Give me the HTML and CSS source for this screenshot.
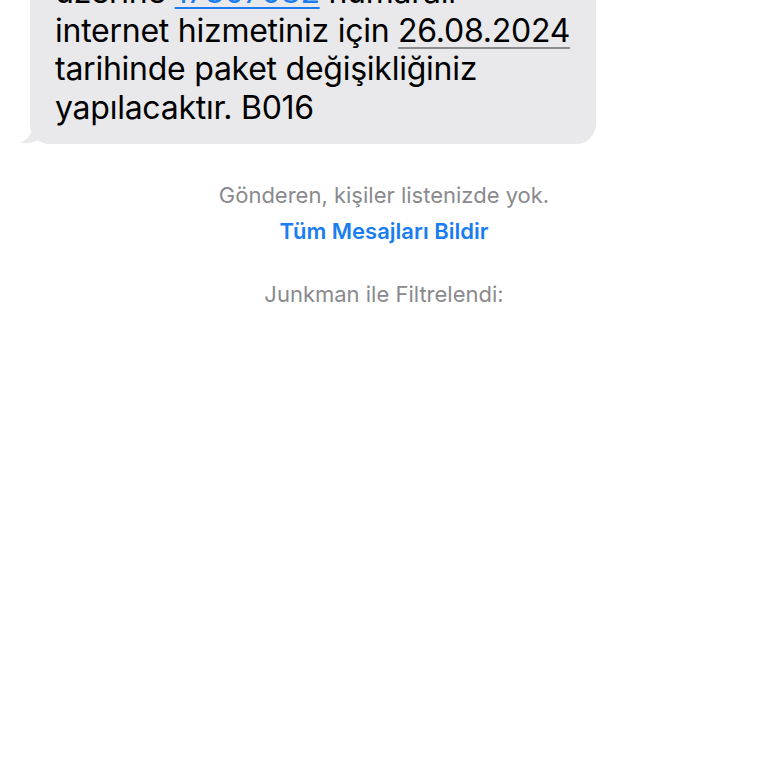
FILE: index.html
```html
<!DOCTYPE html>
<html lang="tr">
<head>
<meta charset="utf-8">
<title>Mesaj</title>
<link rel="stylesheet" href="styles.css">
</head>
<body>
<main class="thread">
  <div class="bubble">
    <svg class="tail" width="30" height="26" viewBox="0 0 30 26" aria-hidden="true">
      <path d="M14 0 C14 10 10 19 0 25 C8 26 16 24 22 19 L30 26 L30 0 Z" fill="#e9e9eb"/>
    </svg>
    <p class="msg">üzerine <span class="link">17307082</span> numaralı internet hizmetiniz için <span class="date">26.08.2024</span> tarihinde paket değişikliğiniz yapılacaktır. B016</p>
  </div>
  <p class="note">Gönderen, kişiler listenizde yok.</p>
  <p class="report">Tüm Mesajları Bildir</p>
  <p class="note filter">Junkman ile Filtrelendi:</p>
</main>
</body>
</html>
```
FILE: styles.css
```css
html, body {
  margin: 0;
  padding: 0;
  background: #ffffff;
}
body {
  font-family: Inter, "Noto Sans", "Liberation Sans", sans-serif;
  width: 768px;
  height: 768px;
  overflow: hidden;
}
.thread {
  display: flex;
  flex-direction: column;
  align-items: center;
}
.bubble {
  position: relative;
  align-self: flex-start;
  margin: -37px 0 0 30px;
  width: 566px;
  box-sizing: border-box;
  padding: 10px 20px 17px 25px;
  background: #e9e9eb;
  border-radius: 20px;
}
.tail {
  position: absolute;
  left: -9px;
  bottom: 0;
}
.msg {
  margin: 0;
  font-size: 32px;
  line-height: 38.5px;
  color: #000;
  letter-spacing: -0.25px;
}
.link {
  color: #1a7df0;
  text-decoration: underline;
  text-decoration-thickness: 2px;
  text-underline-offset: 4px;
}
.date {
  text-decoration: underline;
  text-decoration-color: #8c8c8c;
  text-decoration-thickness: 1.5px;
  text-underline-offset: 5px;
}
.note {
  margin: 38px 0 0;
  font-size: 22px;
  line-height: 26px;
  color: #8a8a8e;
}
.report {
  margin: 10px 0 0;
  font-size: 22px;
  line-height: 26px;
  font-weight: 600;
  color: #1a7df0;
}
.filter {
  margin-top: 37px;
}
```
